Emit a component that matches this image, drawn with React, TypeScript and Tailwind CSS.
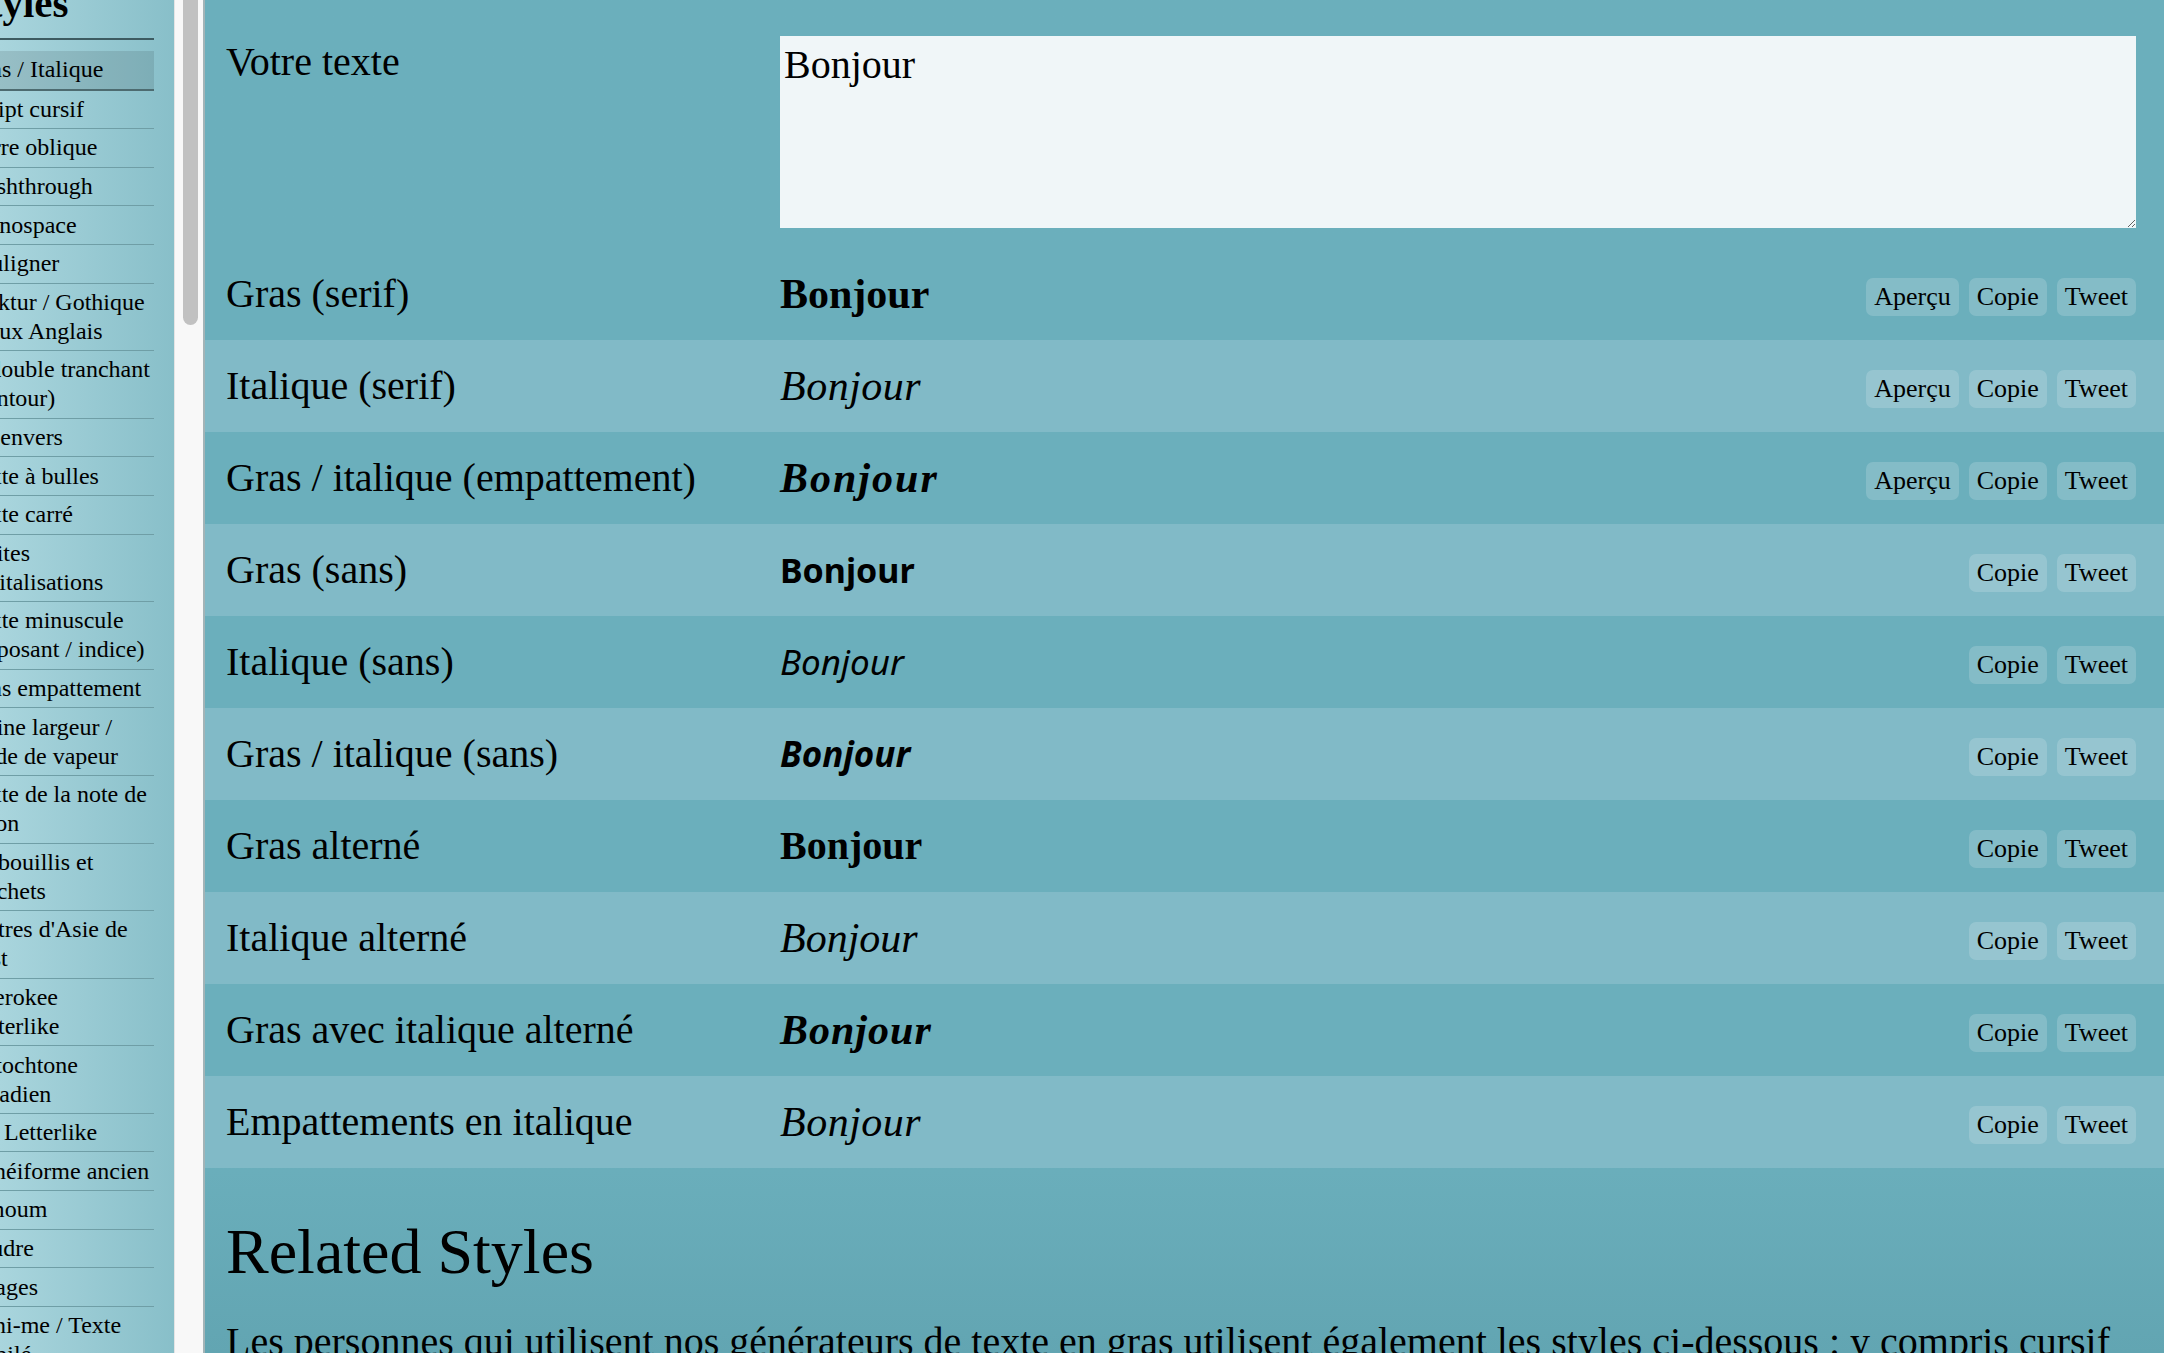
import React from "react";

type Row = { label: string; preview: string; cls: string; apercu?: boolean };

const serif = "font-['Liberation_Serif',serif]";
const sans = "font-['Noto_Sans',sans-serif]";

const rows: Row[] = [
  { label: "Gras (serif)", preview: "Bonjour", cls: `${serif} font-bold text-[42px]`, apercu: true },
  { label: "Italique (serif)", preview: "Bonjour", cls: `${serif} italic text-[42px] tracking-[0.5px]`, apercu: true },
  { label: "Gras / italique (empattement)", preview: "Bonjour", cls: `${serif} font-bold italic text-[42px] tracking-[2px]`, apercu: true },
  { label: "Gras (sans)", preview: "Bonjour", cls: `${sans} font-bold text-[34px]` },
  { label: "Italique (sans)", preview: "Bonjour", cls: `${sans} italic text-[35px]` },
  { label: "Gras / italique (sans)", preview: "Bonjour", cls: `${sans} font-bold italic text-[35px]` },
  { label: "Gras alterné", preview: "Bonjour", cls: `${serif} font-bold text-[40px]` },
  { label: "Italique alterné", preview: "Bonjour", cls: `${serif} italic text-[42px]` },
  { label: "Gras avec italique alterné", preview: "Bonjour", cls: `${serif} font-bold italic text-[42px] tracking-[1px]` },
  { label: "Empattements en italique", preview: "Bonjour", cls: `${serif} italic text-[42px] tracking-[0.5px]` },
];

// sidebar entries, one array item per rendered line
const styles: string[][] = [
  ["Gras / Italique"],
  ["Script cursif"],
  ["Barre oblique"],
  ["Slashthrough"],
  ["Monospace"],
  ["Souligner"],
  ["Fraktur / Gothique", "Vieux Anglais"],
  ["À double tranchant", "(contour)"],
  ["À l'envers"],
  ["Texte à bulles"],
  ["Texte carré"],
  ["Petites", "capitalisations"],
  ["Texte minuscule", "(exposant / indice)"],
  ["Sans empattement"],
  ["Pleine largeur /", "Onde de vapeur"],
  ["Texte de la note de", "façon"],
  ["Gribouillis et", "crochets"],
  ["Lettres d'Asie de", "l'Est"],
  ["Cherokee", "Letterlike"],
  ["Autochtone", "canadien"],
  ["Vai Letterlike"],
  ["Cunéiforme ancien"],
  ["Simoum"],
  ["Foudre"],
  ["Nuages"],
  ["Mini-me / Texte", "empilé"],
];

function Btn({ children }: { children: React.ReactNode }) {
  return (
    <button className="h-[38px] px-[8px] rounded-[7px] bg-white/[0.17] text-[26px] leading-[38px]">
      {children}
    </button>
  );
}

function Sidebar() {
  return (
    <aside className="w-[174px] shrink-0 overflow-hidden bg-linear-to-r from-[#a9d5dd] to-[#88bfc9]">
      <div className="-ml-[34px] w-[188px]">
        <h3 className="-mt-[20px] pb-[11px] border-b-2 border-[#3d5b61] text-[41px] leading-[47px] font-bold">
          Styles
        </h3>
        <ul className="mt-[11px] text-[24px] leading-[29px]">
          {styles.map((lines, i) => (
            <li
              key={i}
              className={
                i === 0
                  ? "py-[4.3px] bg-black/10 border-b-2 border-[#4d6b70]"
                  : "py-[4.3px] border-b border-[#6f9ea6]"
              }
            >
              {lines.map((l, j) => (
                <span key={j} className="block whitespace-nowrap">
                  {l}
                </span>
              ))}
            </li>
          ))}
        </ul>
      </div>
    </aside>
  );
}

export default function App() {
  return (
    <div className={`flex h-[1353px] overflow-hidden ${serif} text-black`}>
      <Sidebar />
      <div className="w-[31px] shrink-0 bg-[#f8f8f8] border-l border-[#e4e4e4] border-r-2 border-r-[#a3b4b7] pl-[8px]">
        <div className="w-[15px] h-[325px] rounded-b-full bg-[#c1c1c1]" />
      </div>
      <main className="flex-1 min-w-0 bg-linear-to-b from-[#6bafbc] from-85% to-[#62a5b2]">
        <div className="flex pl-[21px] pr-[28px] pt-[36px] pb-[20px]">
          <div className="w-[554px] shrink-0 mt-[3px] text-[40px] leading-[46px]">Votre texte</div>
          <textarea
            defaultValue="Bonjour"
            className="flex-1 h-[192px] bg-[#f0f6f8] border-0 outline-none px-[4px] pt-[6px] text-[40px] leading-[46px]"
          />
        </div>
        {rows.map((r, i) => (
          <div
            key={r.label}
            className={`flex items-center h-[92px] pl-[21px] pr-[28px] ${i % 2 === 1 ? "bg-[#81bac7]" : "bg-[#6bafbc]"}`}
          >
            <div className="w-[554px] shrink-0 text-[40px]">{r.label}</div>
            <div className={`flex-1 ${r.cls}`}>{r.preview}</div>
            <div className="flex gap-[10px] mt-[5px]">
              {r.apercu && <Btn>Aperçu</Btn>}
              <Btn>Copie</Btn>
              <Btn>Tweet</Btn>
            </div>
          </div>
        ))}
        <section className="pl-[21px] pr-[28px]">
          <h2 className="mt-[47px] text-[64px] leading-[74px]">Related Styles</h2>
          <p className="mt-[30px] text-[40px] leading-[46px]">
            Les personnes qui utilisent nos générateurs de texte en gras utilisent également les styles ci-dessous : y compris cursif et gothique.
          </p>
        </section>
      </main>
    </div>
  );
}
